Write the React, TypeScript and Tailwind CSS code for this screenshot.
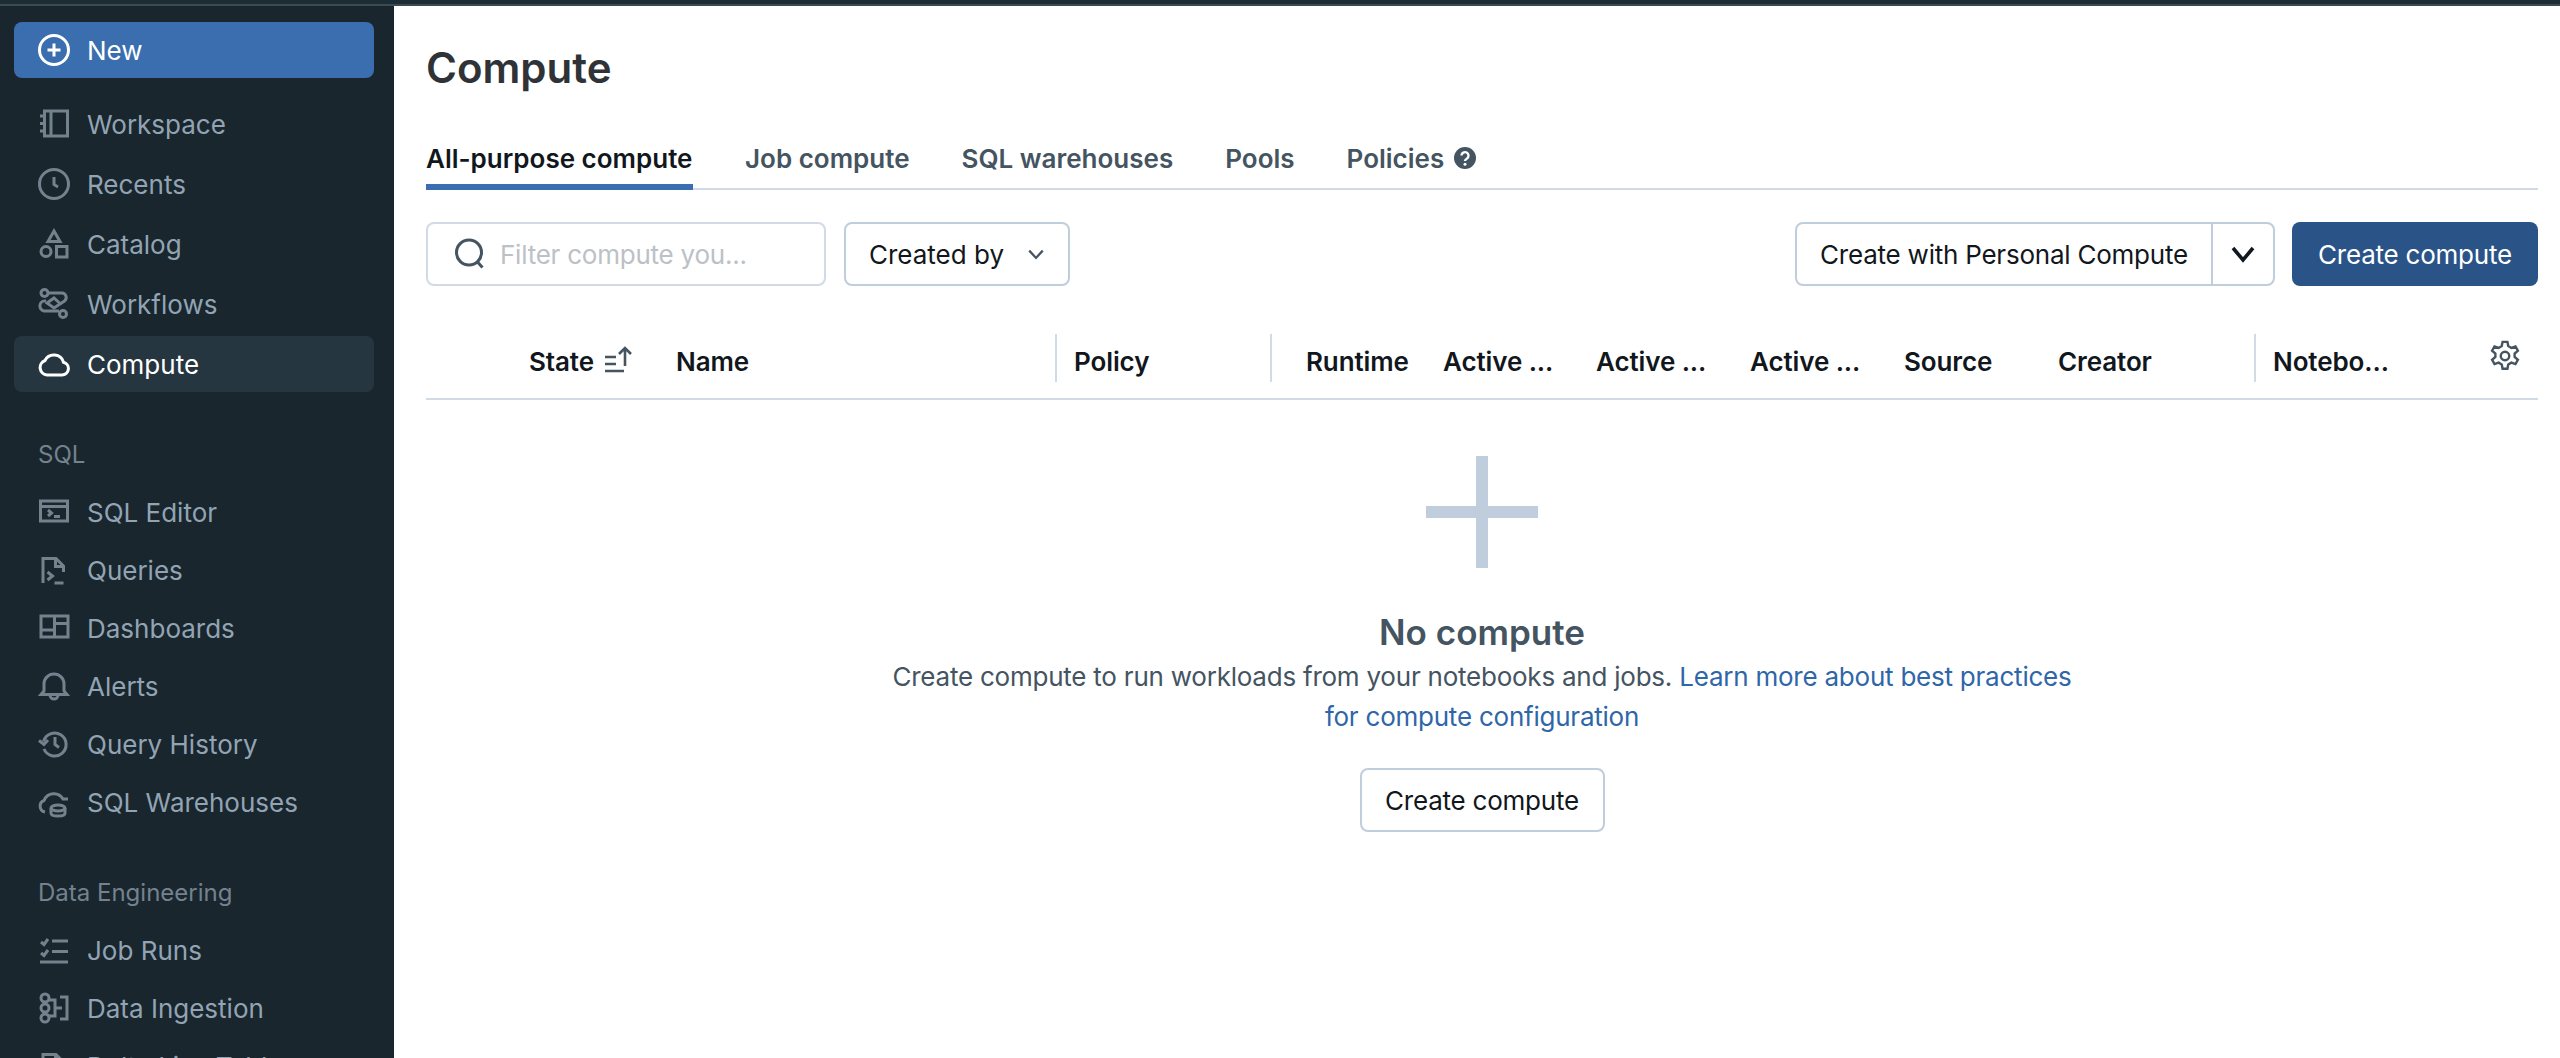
import React from 'react'

const Icon = ({ children, className = '' }: { children: React.ReactNode; className?: string }) => (
  <svg
    viewBox="0 0 32 32"
    fill="none"
    stroke="currentColor"
    strokeWidth="3"
    className={`w-[32px] h-[32px] shrink-0 ${className}`}
  >
    {children}
  </svg>
)

const icons: Record<string, React.ReactNode> = {
  new: (
    <>
      <circle cx="16" cy="16" r="14.500" />
      <path d="M16 9.500v13M9.500 16h13" />
    </>
  ),
  workspace: (
    <>
      <rect x="6.500" y="3" width="23" height="25" />
      <path d="M13 3v25M2 8h6M2 15.500h6M2 23h6" />
    </>
  ),
  recents: (
    <>
      <circle cx="16" cy="16" r="14.500" />
      <path d="M16 9v7.500l4 2.500" />
    </>
  ),
  catalog: (
    <>
      <path d="M16 3l6 10.500H10z" />
      <circle cx="8" cy="23.500" r="5" />
      <rect x="18.500" y="18.500" width="10.500" height="10.500" />
    </>
  ),
  workflows: (
    <>
      <circle cx="6.500" cy="5" r="3.500" />
      <circle cx="25" cy="26" r="3.500" />
      <path d="M10 5h14a4.500 4.500 0 0 1 2.500 8L16 20l-7-5 7-5 6 5.500" />
      <path d="M8 13a5 5 0 0 0-2 10h15" />
    </>
  ),
  compute: <path d="M9 27h15a6.500 6.500 0 0 0 1.500-12.800A10 10 0 0 0 7 12.500 7.500 7.500 0 0 0 9 27z" />,
  editor: (
    <>
      <rect x="2.500" y="5" width="27" height="20" />
      <path d="M2.500 10.500h27M10 14l3.500 3-3.500 3M16 20.500h6" />
    </>
  ),
  queries: (
    <>
      <path d="M5 29V4.500h13l7.500 7.500v6M17.500 4.500v8h8" />
      <path d="M9.500 18l5 4-5 4M16.500 29h9" />
    </>
  ),
  dashboards: (
    <>
      <rect x="3" y="4" width="27" height="21" />
      <path d="M16.500 4v21M3 18h13.500M16.500 11.500H30" />
    </>
  ),
  alerts: (
    <>
      <path d="M3 24.500l3-3.500v-7a10 10 0 0 1 20 0v7l3 3.500z" />
      <path d="M12 25a4 4 0 0 0 8 0" />
    </>
  ),
  history: (
    <>
      <path d="M5.500 13.500A11.500 11.500 0 1 1 6 21" />
      <path d="M1 12.500l5 4 4-4.500" />
      <path d="M17 9v7.500l4 3" />
    </>
  ),
  warehouses: (
    <>
      <path d="M7 26a6 6 0 0 1-1-11.500A10.500 10.500 0 0 1 25 13h5" />
      <ellipse cx="20" cy="22" rx="7" ry="3" />
      <path d="M13 22v5c0 2 3 3 7 3s7-1 7-3v-5" />
    </>
  ),
  jobruns: <path d="M3 8l3 2.500L10 5M3 19l3 2.500L10 16M14 7h16M14 17.500h16M2 28h28" />,
  ingestion: (
    <>
      <circle cx="7" cy="6" r="4" />
      <circle cx="7" cy="16" r="4" />
      <circle cx="7" cy="26" r="4" />
      <path d="M11 8h6v16h-6M22 5h7v22h-7M17 16h7" />
    </>
  ),
  tables: <path d="M5 29V4.500h13l7.500 7.500v17M17.500 4.500v8h8" />,
}

const NavItem = ({ icon, label, tall, active }: { icon: string; label: string; tall?: boolean; active?: boolean }) => (
  <div
    className={`flex items-center gap-[17px] ml-[14px] mr-[20px] pl-[24px] rounded-[8px] ${tall ? 'h-[58px]' : 'h-[56px]'} ${
      active ? 'bg-[#263640] text-white' : 'text-[#92a4b3]'
    }`}
  >
    <Icon className={active ? '' : 'text-[#74828e]'}>{icons[icon]}</Icon>
    <span className="pt-[2px] text-[26px] leading-[32px] whitespace-nowrap">{label}</span>
  </div>
)

const Sidebar = () => (
  <aside className="w-[394px] shrink-0 h-full bg-[#19262e] overflow-hidden pt-[16px]">
    <div className="flex items-center gap-[17px] ml-[14px] mr-[20px] pl-[24px] h-[56px] rounded-[8px] bg-[#3a6eae] text-white">
      <Icon>{icons.new}</Icon>
      <span className="pt-[2px] text-[26px] leading-[32px]">New</span>
    </div>
    <div className="mt-[18px] flex flex-col gap-[4px]">
      <NavItem icon="workspace" label="Workspace" />
      <NavItem icon="recents" label="Recents" />
      <NavItem icon="catalog" label="Catalog" />
      <NavItem icon="workflows" label="Workflows" />
      <NavItem icon="compute" label="Compute" active />
    </div>
    <div className="mt-[44px] mb-[11px] h-[36px] pt-[2px] pl-[38px] flex items-center text-[24px] text-[#74828e]">SQL</div>
    <NavItem tall icon="editor" label="SQL Editor" />
    <NavItem tall icon="queries" label="Queries" />
    <NavItem tall icon="dashboards" label="Dashboards" />
    <NavItem tall icon="alerts" label="Alerts" />
    <NavItem tall icon="history" label="Query History" />
    <NavItem tall icon="warehouses" label="SQL Warehouses" />
    <div className="mt-[43px] mb-[11px] h-[36px] pt-[2px] pl-[38px] flex items-center text-[24px] text-[#74828e]">
      Data Engineering
    </div>
    <NavItem tall icon="jobruns" label="Job Runs" />
    <NavItem tall icon="ingestion" label="Data Ingestion" />
    <NavItem tall icon="tables" label="Delta Live Tables" />
  </aside>
)

const Tabs = () => (
  <div className="mt-[40px] flex gap-[52px] border-b-2 border-[#d1dbe6] h-[60px]">
    <div className="w-[267px] whitespace-nowrap h-[60px] -mb-[2px] pt-[13px] border-b-[6px] border-[#3a6eae] text-[26px] leading-[32px] font-semibold text-[#11171c]">
      All-purpose compute
    </div>
    {['Job compute', 'SQL warehouses', 'Pools'].map((t) => (
      <div key={t} className="pt-[13px] text-[26px] leading-[32px] font-semibold text-[#445461]">
        {t}
      </div>
    ))}
    <div className="pt-[13px] flex items-start gap-[9px] text-[26px] leading-[32px] font-semibold text-[#445461]">
      Policies
      <svg viewBox="0 0 24 24" className="w-[24px] h-[24px] mt-[3px]">
        <circle cx="12" cy="12" r="11" fill="#445461" />
        <path d="M8.500 9.500a3.500 3.500 0 1 1 5.500 3c-1.300.8-2 1.300-2 2.500" fill="none" stroke="#fff" strokeWidth="2.400" />
        <circle cx="12" cy="18.300" r="1.500" fill="#fff" />
      </svg>
    </div>
  </div>
)

const Toolbar = () => (
  <div className="mt-[32px] flex items-stretch h-[64px] text-[26px] tracking-[-0.23px]">
    <div className="w-[400px] flex items-center gap-[14px] pl-[26px] border-2 border-[#d1dbe6] rounded-[8px]">
      <svg viewBox="0 0 32 32" fill="none" stroke="#445461" strokeWidth="3" className="w-[32px] h-[32px]">
        <circle cx="15" cy="14.500" r="12.500" />
        <path d="M23.500 24l5 5.500" />
      </svg>
      <span className="text-[#bcc1c6] whitespace-nowrap">Filter compute you...</span>
    </div>
    <div className="ml-[18px] w-[226px] flex items-center gap-[23px] pl-[23px] border-2 border-[#c0cddc] rounded-[8px] tracking-normal text-[#11171c]">
      Created by
      <svg viewBox="0 0 16 16" fill="none" stroke="#445461" strokeWidth="2" className="w-[18px] h-[18px]">
        <path d="M2 5l6 6.500L14 5" />
      </svg>
    </div>
    <div className="ml-auto w-[480px] flex border-2 border-[#c0cddc] rounded-[8px] text-[#11171c]">
      <div className="flex-1 flex items-center justify-center">Create with Personal Compute</div>
      <div className="w-[62px] flex items-center justify-center border-l-2 border-[#c0cddc]">
        <svg viewBox="0 0 24 24" fill="none" stroke="#11171c" strokeWidth="3.600" className="w-[24px] h-[24px]">
          <path d="M2 6l10 12L22 6" />
        </svg>
      </div>
    </div>
    <div className="ml-[17px] w-[246px] flex items-center justify-center rounded-[8px] bg-[#2a5488] text-white">
      Create compute
    </div>
  </div>
)

const TableHeader = () => (
  <div className="mt-[48px] flex h-[48px] text-[26px] font-semibold tracking-[-0.1px] text-[#11171c] items-center">
    <div className="w-[103px]" />
    <div className="w-[147px] pt-[7px] flex items-center gap-[10px]">
      State
      <svg viewBox="0 0 30 30" fill="none" stroke="#445461" strokeWidth="2.600" className="w-[30px] h-[30px] -mt-[4px]">
        <path d="M1 12h11M1 19h11M1 26h19M21 21V3M15 9l6-6 6 6" />
      </svg>
    </div>
    <div className="w-[379px] pt-[7px]">Name</div>
    <div className="w-[215px] h-full pl-[17px] pt-[7px] flex items-center border-l-2 border-[#d1dbe6]">Policy</div>
    <div className="w-[173px] h-full pl-[34px] pt-[7px] flex items-center border-l-2 border-[#d1dbe6]">Runtime</div>
    <div className="w-[153px] pt-[7px]">Active ...</div>
    <div className="w-[154px] pt-[7px]">Active ...</div>
    <div className="w-[154px] pt-[7px]">Active ...</div>
    <div className="w-[154px] pt-[7px]">Source</div>
    <div className="w-[196px] pt-[7px]">Creator</div>
    <div className="flex-1 h-full pl-[17px] pt-[7px] flex items-center justify-between border-l-2 border-[#d1dbe6]">
      Notebo...
      <svg viewBox="0 0 24 24" fill="none" stroke="#445461" strokeWidth="1.700" className="w-[34px] h-[34px] -mt-[11px] mr-[16px]">
        <circle cx="12" cy="12" r="3" />
        <path d="M10.300 2h3.400l.6 3 2.200 1.300 2.900-1 1.700 3-2.300 2v2.400l2.300 2-1.700 3-2.900-1-2.200 1.300-.6 3h-3.400l-.6-3-2.200-1.300-2.900 1-1.700-3 2.300-2v-2.400l-2.300-2 1.700-3 2.900 1 2.200-1.300z" />
      </svg>
    </div>
  </div>
)

const EmptyState = () => (
  <div className="flex flex-col items-center">
    <svg viewBox="0 0 112 112" className="mt-[56px] w-[112px] h-[112px]">
      <path d="M50 0h12v50h50v12H62v50H50V62H0V50h50z" fill="#c0cddc" />
    </svg>
    <div className="mt-[42px] text-[35px] leading-[44px] font-semibold text-[#445461]">No compute</div>
    <div className="mt-[3px] w-[1200px] text-center text-[26px] leading-[40px] tracking-[-0.23px] text-[#445461]">
      Create compute to run workloads from your notebooks and jobs.{' '}
      <span className="text-[#2f66a8]">Learn more about best practices for compute configuration</span>
    </div>
    <div className="mt-[31px] h-[64px] w-[245px] flex items-center justify-center border-2 border-[#c0cddc] rounded-[8px] text-[26px] tracking-[-0.23px] text-[#11171c]">
      Create compute
    </div>
  </div>
)

export default function App() {
  return (
    <div className="w-[2560px] h-[1058px] flex flex-col overflow-hidden bg-white font-['Inter',sans-serif]">
      <div className="h-[6px] shrink-0 bg-[#1c2d36] border-b-2 border-[#3b4b52]" />
      <div className="flex flex-1 min-h-0">
        <Sidebar />
        <main className="flex-1 pl-[32px] pr-[22px]">
          <h1 className="mt-[40px] text-[42px] leading-[44px] font-semibold text-[#2f3338]">Compute</h1>
          <Tabs />
          <Toolbar />
          <TableHeader />
          <div className="mt-[16px] h-[2px] bg-[#d1dbe6]" />
          <EmptyState />
        </main>
      </div>
    </div>
  )
}
